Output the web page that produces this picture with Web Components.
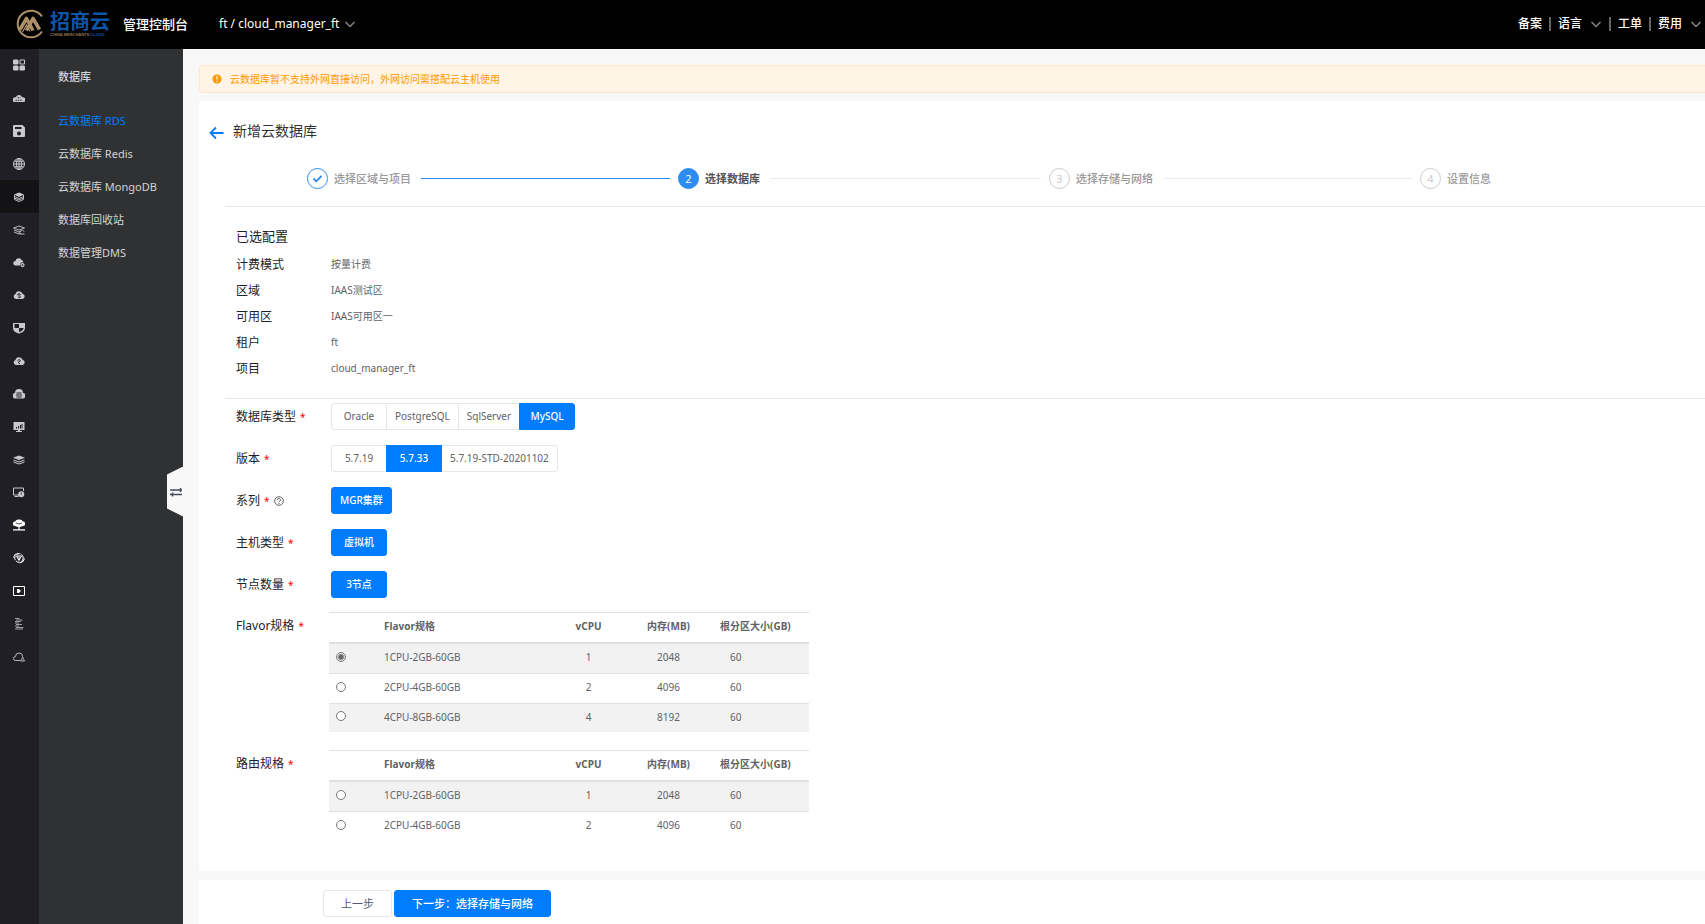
<!DOCTYPE html>
<html lang="zh-CN">
<head>
<meta charset="utf-8">
<title>新增云数据库</title>
<style>
  html, body { margin: 0; height: 100%; }
  body {
    font-family: "Noto Sans", "Noto Sans CJK SC", sans-serif;
    font-size: 10px;
    line-height: 16px;
    color: #606266;
    background: #f8f8f8;
    overflow-x: hidden;
  }
</style>
</head>
<body>
<cloud-app></cloud-app>

<script>
const define = (name, html, setup) => {
  const template = document.createElement('template');
  template.innerHTML = html;
  customElements.define(name, class extends HTMLElement {
    constructor() {
      super();
      this.attachShadow({ mode: 'open' }).append(template.content.cloneNode(true));
    }
    connectedCallback() {
      if (setup && !this.ready) { this.ready = true; setup(this, this.shadowRoot); }
    }
  });
};

const caret = '<svg width="12" height="12" viewBox="0 0 12 12" fill="none" stroke="#858585" stroke-width="1.5" aria-hidden="true"><path d="M1.5 4 6 8.5 10.5 4"/></svg>';

define('brand-logo', `
<style>
  :host { display: flex; align-items: center; gap: 6px; }
  .words { display: flex; flex-direction: column; font-family: "Noto Sans CJK SC", sans-serif; }
  .cn { font-size: 20px; line-height: 22px; font-weight: 700; color: #0d55a6; }
  .en { font: bold 4px/6px "Liberation Sans", sans-serif; color: #8f7452; white-space: nowrap; }
  .en b { color: #0d55a6; }
</style>
<svg width="29" height="30" viewBox="0 0 29 30" fill="none" stroke="#ae9068" aria-hidden="true">
  <path stroke-width="2" d="M27 7.500A13.300 13.300 0 1 0 27 22.500"/>
  <path stroke-width="3.600" stroke-linejoin="round" d="M5 20.500 11.500 9.500l6.500 12"/>
  <path stroke-width="3.600" stroke-linejoin="round" d="M11.500 21.500 18 9.500l6.500 11"/>
  <path stroke-width="1.200" d="M7.500 23 11.500 16l3.500 6.500"/>
</svg>
<div class="words"><span class="cn">招商云</span><span class="en">CHINA MERCHANTS <b>CLOUD</b></span></div>
`);

define('app-header', `
<style>
  :host { display: flex; align-items: center; height: 49px; box-sizing: border-box; padding: 0 3px 2px 15px; background: #000; color: #fff; font-size: 12px; }
  .name { margin-left: 13px; font-size: 13px; font-weight: 500; }
  .project { margin-left: 31px; }
  button { display: flex; align-items: center; gap: 5px; padding: 0; border: 0; background: none; color: inherit; font: inherit; cursor: pointer; }
  nav { display: flex; align-items: center; margin-left: auto; font-weight: 500; }
  nav > * + * { margin-left: 7px; padding-left: 7px; border-left: 2px solid #666; }
  nav > * { line-height: 14px; }
  nav button { gap: 8px; height: 14px; }
  a { color: inherit; text-decoration: none; }
</style>
<brand-logo></brand-logo>
<span class="name">管理控制台</span>
<button class="project">ft / cloud_manager_ft ${caret}</button>
<nav>
  <a href="#">备案</a>
  <button>语言 ${caret}</button>
  <a href="#">工单</a>
  <button>费用 ${caret}</button>
</nav>
`);

const cloud = 'M6 20a5 5 0 0 1-1-9.800A7.200 7.200 0 0 1 19 9.500 5.300 5.300 0 0 1 18.500 20z';
const railIcons = [
  ['总览', '<rect x="0" y="1" width="11" height="10" rx="2.500"/><rect x="0" y="13" width="11" height="10" rx="2.500"/><rect x="13" y="13" width="11" height="10" rx="2.500"/><path d="M14 2h9v8h-9z" fill="none" stroke="currentColor" stroke-width="2"/>'],
  ['弹性计算', '<path d="M3 20a4.500 4.500 0 0 1 0-9l3-1a6.500 6.500 0 0 1 12 0l3 1a4.500 4.500 0 0 1 0 9z"/><path d="M5 16.500h14M9 11.500h6" stroke="#201f26" stroke-width="2" stroke-dasharray="3 1.500"/>'],
  ['存储', '<path fill-rule="evenodd" d="M2 0h17l5 5v17a2 2 0 0 1-2 2H2a2 2 0 0 1-2-2V2a2 2 0 0 1 2-2zM4 4v4h13V4zM12 13a4 4 0 1 0 0 8 4 4 0 0 0 0-8z"/>'],
  ['网络', '<g fill="none" stroke="currentColor" stroke-width="2"><circle cx="12" cy="12" r="11"/><ellipse cx="12" cy="12" rx="5" ry="11"/><path d="M12 1v22M1 12h22M3 6.500h18M3 17.500h18"/></g>'],
  ['数据库', '<path d="M12 3 22 7l-10 5L2 7z"/><g fill="none" stroke="currentColor" stroke-width="1.800"><path d="M3 8v9l9 4 9-4V8M3 11l9 4 9-4M3 14l9 4 9-4"/></g>'],
  ['缓存', '<g fill="none" stroke="currentColor" stroke-width="1.800"><path d="M12 4 23 8l-11 4L1 8zM2 12l10 4 4-1M2 16l10 4 4-1M16 20a3 3 0 0 1 0-6 3.500 3.500 0 0 1 6 1M16 20h7"/></g>'],
  ['云服务', '<path d="M5 19a4.500 4.500 0 0 1 0-9 6.500 6.500 0 0 1 12.500-1.500c2 .5 3 2 3 4A5.500 5.500 0 0 0 14 19z"/><circle cx="19" cy="18" r="3" fill="none" stroke="currentColor" stroke-width="2.500"/>'],
  ['迁移', `<path d="${cloud}"/><path d="M8 12l4-3v9l4-3M12 9l4 3" fill="none" stroke="#201f26" stroke-width="1.800"/>`],
  ['安全', '<path fill-rule="evenodd" d="M0 2h24v10c0 6-6 10-12 11C6 22 0 18 0 12zM12 4v8H3V4h9M12 12h9c0 4-4 7-9 8z"/>'],
  ['监控', `<path d="${cloud}"/><path d="M9 11l4-2 2 3-4 2v2l3 2" fill="none" stroke="#201f26" stroke-width="1.800"/>`],
  ['云管理', '<path d="M5 21a5 5 0 0 1-1-11 8 8 0 0 1 16 0 5 5 0 0 1-1 11z"/><path d="M7 10h10M6 14h12M7 18h10" stroke="#201f26" stroke-width="2"/>'],
  ['报表', '<path fill-rule="evenodd" d="M1 2h22v16h-9v2h4v2H6v-2h4v-2H1zM6 12v3h2v-3zm4-2v5h2v-5zm4-2v7h2V8zm3-2v9h2V6z"/>'],
  ['中间件', '<path d="M12 3 24 7.500 12 12 0 7.500z"/><path d="M1 12l11 4 11-4M1 16l11 4 11-4" fill="none" stroke="currentColor" stroke-width="2"/>'],
  ['云桌面', '<path d="M12 18H1V4h20v6M3 21h8" fill="none" stroke="currentColor" stroke-width="2"/><circle cx="16.500" cy="16.500" r="6"/><path d="M16.500 13v5" stroke="#201f26" stroke-width="1.500"/>'],
  ['云网络', '<path d="M4.500 14a4.500 4.500 0 0 1-.5-9A8.300 8.300 0 0 1 12 1a8.300 8.300 0 0 1 8 4 4.500 4.500 0 0 1-.5 9l-5 2h-5z"/><path d="M6 8q6 4 12 0" fill="none" stroke="#201f26" stroke-width="1.500"/><path d="M12 14v7M0 21.500h24" stroke="currentColor" stroke-width="2.500"/>', 1],
  ['容器', '<g fill="none" stroke="currentColor" stroke-width="2"><circle cx="12" cy="12" r="8.500" stroke-dasharray="9 2"/><path d="M7 8h10l-5 9zM1 11l3-6 7-2M23 13l-3 6-7 3"/><path d="M12 9v7"/></g>', 1],
  ['视频', '<path d="M1 3h22v18H1z" fill="none" stroke="currentColor" stroke-width="2"/><path d="M8 8h4l4 4-4 4H8z"/>', 1],
  ['日志', '<g stroke="currentColor" stroke-width="1.500"><path d="M4 1h9M6 4h13M4 7h12M4 10h8M6 13h12M4 16h8M6 19h15M4 22h16"/></g>'],
  ['告警', '<path d="M14 19H5a4 4 0 0 1 0-8 7 7 0 0 1 14 0l2 2M15 20l4-7 4 7z" fill="none" stroke="currentColor" stroke-width="1.800"/>'],
];

define('icon-rail', `
<style>
  :host { display: block; width: 39px; flex: none; background: #201f26; }
  nav { display: grid; grid-auto-rows: 1fr; height: 624px; }
  a { display: grid; place-items: center; padding-right: 1px; color: #c9c9cb; }
  a[aria-current] { background: #131316; }
  a.bright { color: #fff; }
  svg { display: block; fill: currentColor; }
</style>
<nav aria-label="产品">${railIcons.map(([label, body, bright], i) =>
  `<a href="#" aria-label="${label}"${i === 4 ? ' aria-current="page"' : ''}${bright ? ' class="bright"' : ''}><svg width="12" height="12" viewBox="0 0 24 24">${body}</svg></a>`).join('')}</nav>
`);

define('side-menu', `
<style>
  :host { display: block; position: relative; width: 144px; flex: none; box-sizing: border-box; padding: 20px 0 0 19px; background: #303133; color: #d4d4d4; font-size: 11px; }
  h2 { margin: 0 0 19px; font-size: 11px; line-height: 16px; font-weight: 500; }
  nav { display: flex; flex-direction: column; }
  ::slotted(a) { color: inherit; text-decoration: none; line-height: 33px; }
  ::slotted(a[aria-current]) { color: #007dff; }
  button { position: absolute; right: 0; top: calc(50% - 20px); width: 16px; height: 50px; padding: 0; border: 0; background: #f8f8f8; clip-path: polygon(100% 0, 0 16%, 0 84%, 100% 100%); display: grid; place-items: center end; cursor: pointer; }
</style>
<h2>数据库</h2>
<nav><slot></slot></nav>
<button aria-label="收起菜单"><svg width="13" height="10" viewBox="0 0 13 10" fill="none" stroke="#454b58" stroke-width="1.500"><path d="M0 3h12M10.500 1v4M0 7.500h12M2.500 5.500v4"/></svg></button>
`);

define('page-alert', `
<style>
  :host { display: flex; align-items: center; gap: 8px; height: 28px; box-sizing: border-box; padding: 0 12px; border: 1px solid #ffe8c8; border-right: 0; border-radius: 4px 0 0 4px; background: #fff4e5; color: #ff9900; }
</style>
<svg width="10" height="10" viewBox="0 0 10 10" aria-hidden="true"><circle cx="5" cy="5" r="4.500" fill="#ff9900"/><path d="M5 2v3.600M5 6.700v1.300" stroke="#fff4e5" stroke-width="1.300"/></svg>
<span><slot></slot></span>
`);

define('step-item', `
<style>
  :host { display: flex; align-items: center; flex: 1; color: #999; font-size: 11px; }
  :host([last]) { flex: 0 0 285px; }
  .dot { display: grid; place-items: center; width: 21px; height: 21px; box-sizing: border-box; border: 1px solid #ccc; border-radius: 50%; color: #ccc; }
  .text { margin-left: 6px; white-space: nowrap; font-weight: 500; }
  .line { flex: 1; height: 1px; margin: 0 8px 0 10px; background: #e8eaec; }
  :host([last]) .line { display: none; }
  :host([state=done]) .dot { border-color: #2d8cf0; }
  :host([state=done]) .line { background: #2d8cf0; }
  :host([state=current]) .dot { border-color: #2d8cf0; background: #2d8cf0; color: #fff; }
  :host([state=current]) .text { color: #555; font-weight: 700; }
</style>
<span class="dot"></span><span class="text"><slot></slot></span><span class="line"></span>
`, (host, root) => {
  root.querySelector('.dot').innerHTML = host.getAttribute('state') === 'done'
    ? '<svg width="11" height="11" viewBox="0 0 11 11" fill="none" stroke="#2d8cf0" stroke-width="1.800" aria-label="已完成"><path d="M1.500 5.500 4.300 8.300 9.500 3"/></svg>'
    : host.getAttribute('number');
});

define('step-bar', `
<style>
  :host { display: flex; padding: 27px 0 17px 82px; border-bottom: 1px solid #e8e8e8; }
</style>
<slot></slot>
`);

define('info-row', `
<style>
  :host { display: grid; grid-template-columns: 95px 1fr; align-items: center; height: 26px; }
  .label { color: #1f2226; font-size: 12px; }
  .value { padding-bottom: 2px; }
</style>
<span class="label"></span><span class="value"><slot></slot></span>
`, (host, root) => { root.querySelector('.label').textContent = host.getAttribute('label'); });

define('form-row', `
<style>
  :host { display: grid; grid-template-columns: 95px 1fr; align-items: start; }
  .label { display: flex; align-items: center; gap: 4px; height: 27px; color: #1f2226; font-size: 12px; white-space: nowrap; }
  .star { color: #f00; font-size: 10px; }
  svg { display: none; }
  :host([help]) svg { display: block; }
</style>
<span class="label"><span class="name"></span><span class="star">*</span><svg width="10" height="10" viewBox="0 0 10 10" fill="none" stroke="#606266" aria-label="帮助"><circle cx="5" cy="5" r="4.300"/><path d="M3.500 4a1.500 1.500 0 1 1 2 1.400L5 6M5 7v1"/></svg></span>
<slot></slot>
`, (host, root) => { root.querySelector('.name').textContent = host.getAttribute('label'); });

define('choice-group', `
<style>
  :host { display: block; }
  div { display: flex; }
  button { min-width: 56px; height: 27px; box-sizing: border-box; padding: 0 8px 2px; border: 1px solid #e4e6e8; background: #fff; color: #606266; font: inherit; cursor: pointer; }
  button + button { margin-left: -1px; }
  button:first-child { border-radius: 3px 0 0 3px; }
  button:last-child { border-radius: 0 3px 3px 0; }
  button:only-child { border-radius: 3px; }
  button[aria-pressed=true] { border-color: #007dff; background: #007dff; color: #fff; font-weight: 500; z-index: 1; }
</style>
<div role="group"></div>
`, (host, root) => {
  const group = root.querySelector('div');
  group.setAttribute('aria-label', host.parentElement.getAttribute('label'));
  host.getAttribute('options').split('|').forEach(text => {
    const button = document.createElement('button');
    button.type = 'button';
    button.textContent = text;
    button.setAttribute('aria-pressed', text === host.getAttribute('value'));
    button.addEventListener('click', () =>
      group.querySelectorAll('button').forEach(b => b.setAttribute('aria-pressed', b === button)));
    group.append(button);
  });
});

define('flavor-table', `
<style>
  :host { display: block; width: 480px; margin-left: -2px; }
  table { width: 100%; table-layout: fixed; border-collapse: separate; border-spacing: 0; }
  th, td { box-sizing: border-box; height: 29px; padding: 0 0 3px; border-top: 1px solid #dee2e6; text-align: center; line-height: 16px; }
  th { height: 32px; border-bottom: 2px solid #dee2e6; font-weight: 700; }
  tbody tr:first-child td { border-top: 0; }
  tbody tr:nth-child(2) td { height: 30px; }
  tbody tr:nth-child(odd) { background: #f2f2f2; }
  th:nth-child(2), td:nth-child(2) { text-align: left; }
  th:nth-child(5) { text-align: left; padding-left: 11px; }
  td:nth-child(5) { text-align: left; padding-left: 21px; }
  input { appearance: none; display: block; width: 10px; height: 10px; box-sizing: border-box; margin: 0 0 1px 7px; border: 1px solid #767676; border-radius: 50%; background: #fff; }
  input:checked { background: radial-gradient(circle, #666 0 2px, #fff 4px); }
</style>
<table>
  <colgroup><col style="width:55px"><col style="width:165px"><col style="width:79px"><col style="width:81px"><col></colgroup>
  <thead><tr><th aria-label="选择"></th><th>Flavor规格</th><th>vCPU</th><th>内存(MB)</th><th>根分区大小(GB)</th></tr></thead>
  <tbody></tbody>
</table>
`, (host, root) => {
  const flavors = [[1, 2048, 60], [2, 4096, 60], [4, 8192, 60]].slice(0, +host.getAttribute('rows'));
  root.querySelector('tbody').innerHTML = flavors.map(([cpu, mem, disk]) => {
    const name = `${cpu}CPU-${mem >> 10}GB-${disk}GB`;
    const checked = host.getAttribute('value') === name ? ' checked' : '';
    return `<tr><td><input type="radio" name="flavor" aria-label="${name}"${checked}></td><td>${name}</td><td>${cpu}</td><td>${mem}</td><td>${disk}</td></tr>`;
  }).join('');
});

define('create-panel', `
<style>
  :host { display: block; padding: 20px 0 30px 26px; background: #fff; }
  header { display: flex; align-items: center; gap: 9px; margin-left: -16px; }
  header a { display: block; height: 14px; padding-top: 4px; }
  h1 { margin: 0; font-size: 14px; line-height: 20px; font-weight: 400; color: #303133; }
  .picked { padding: 19px 0 16px 11px; border-bottom: 1px solid #e8e8e8; }
  h2 { margin: 0 0 6px; font-size: 13px; line-height: 20px; font-weight: 400; color: #1f2226; }
  form { padding: 4px 0 0 11px; }
  .choices { display: grid; gap: 15px; }
  .flavors { display: grid; gap: 18px; padding-top: 14px; }
</style>
<header>
  <a href="#" aria-label="返回"><svg width="15" height="14" viewBox="0 0 15 14" fill="none" stroke="#007dff" stroke-width="1.800"><path d="M14.500 7H1.500M7 1.500 1.500 7 7 12.500"/></svg></a>
  <h1>新增云数据库</h1>
</header>
<step-bar>
  <step-item state="done">选择区域与项目</step-item>
  <step-item state="current" number="2">选择数据库</step-item>
  <step-item number="3">选择存储与网络</step-item>
  <step-item number="4" last>设置信息</step-item>
</step-bar>
<section class="picked">
  <h2>已选配置</h2>
  <info-row label="计费模式">按量计费</info-row>
  <info-row label="区域">IAAS测试区</info-row>
  <info-row label="可用区">IAAS可用区一</info-row>
  <info-row label="租户">ft</info-row>
  <info-row label="项目">cloud_manager_ft</info-row>
</section>
<form>
  <div class="choices">
    <form-row label="数据库类型"><choice-group options="Oracle|PostgreSQL|SqlServer|MySQL" value="MySQL"></choice-group></form-row>
    <form-row label="版本"><choice-group options="5.7.19|5.7.33|5.7.19-STD-20201102" value="5.7.33"></choice-group></form-row>
    <form-row label="系列" help><choice-group options="MGR集群" value="MGR集群"></choice-group></form-row>
    <form-row label="主机类型"><choice-group options="虚拟机" value="虚拟机"></choice-group></form-row>
    <form-row label="节点数量"><choice-group options="3节点" value="3节点"></choice-group></form-row>
  </div>
  <div class="flavors">
    <form-row label="Flavor规格"><flavor-table rows="3" value="1CPU-2GB-60GB"></flavor-table></form-row>
    <form-row label="路由规格"><flavor-table rows="2"></flavor-table></form-row>
  </div>
</form>
`);

define('action-bar', `
<style>
  :host { display: flex; gap: 2px; flex: 1; box-sizing: border-box; padding: 10px 0 7px 124px; background: #fff; }
  button { height: 27px; box-sizing: border-box; padding: 0 17px; border: 1px solid #e4e6e8; border-radius: 3px; background: #fff; color: #515a6e; font: inherit; font-size: 11px; cursor: pointer; }
  .next { border-color: #007dff; background: #007dff; color: #fff; font-weight: 500; }
</style>
<button type="button">上一步</button>
<button type="button" class="next">下一步：选择存储与网络</button>
`);

define('cloud-app', `
<style>
  :host { display: flex; flex-direction: column; min-height: 100vh; }
  .body { display: flex; flex: 1; }
  main { display: flex; flex-direction: column; flex: 1; min-width: 0; padding: 16px 0 0 16px; }
  create-panel { margin: 8px 0 9px; }
</style>
<app-header></app-header>
<div class="body">
  <icon-rail></icon-rail>
  <side-menu>
    <a href="#" aria-current="page">云数据库 RDS</a>
    <a href="#">云数据库 Redis</a>
    <a href="#">云数据库 MongoDB</a>
    <a href="#">数据库回收站</a>
    <a href="#">数据管理DMS</a>
  </side-menu>
  <main>
    <page-alert>云数据库暂不支持外网直接访问，外网访问需搭配云主机使用</page-alert>
    <create-panel></create-panel>
    <action-bar></action-bar>
  </main>
</div>
`);
</script>
</body>
</html>
